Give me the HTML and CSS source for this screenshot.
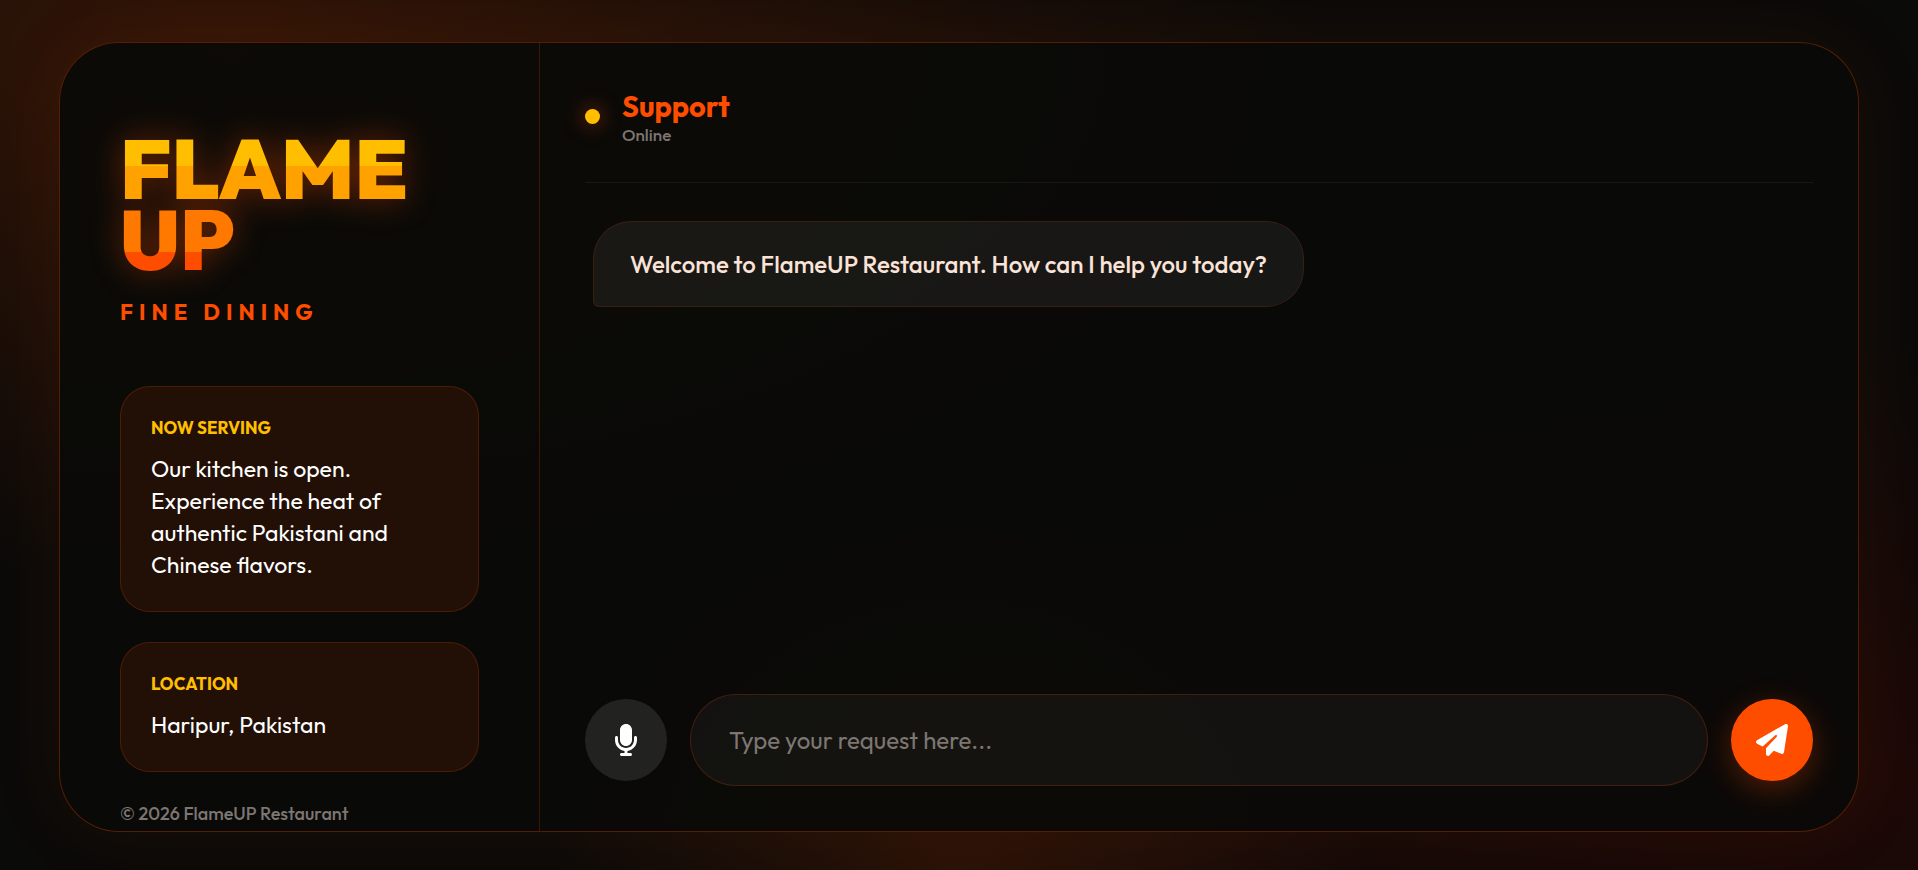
FILE: index.html
```html
<!DOCTYPE html>
<html lang="en">
<head>
  <meta charset="UTF-8" />
  <meta name="viewport" content="width=device-width, initial-scale=1.0"/>
  <title>FlameUP Restaurant</title>
  <link rel="stylesheet" href="styles.css">
</head>
<body>
  <div class="app">
    <aside class="sidebar">
      <h1 class="logo">FLAME<br>UP</h1>
      <p class="tagline">FINE DINING</p>

      <section class="info-card">
        <h2>NOW SERVING</h2>
        <p>Our kitchen is open. Experience the heat of authentic Pakistani and Chinese flavors.</p>
      </section>

      <section class="info-card">
        <h2>LOCATION</h2>
        <p>Haripur, Pakistan</p>
      </section>

      <footer>© 2026 FlameUP Restaurant</footer>
    </aside>

    <main class="chat">
      <header class="chat-header">
        <span class="status-dot"></span>
        <div>
          <h2>Support</h2>
          <p>Online</p>
        </div>
      </header>

      <div class="messages">
        <div class="message bot">Welcome to FlameUP Restaurant. How can I help you today?</div>
      </div>

      <form class="input-area">
        <button type="button" class="btn mic" aria-label="Voice input">
          <svg viewBox="0 0 384 512" width="24" height="32" fill="currentColor">
            <path d="M192 0C139 0 96 43 96 96V256c0 53 43 96 96 96s96-43 96-96V96c0-53-43-96-96-96zM64 216c0-13.300-10.700-24-24-24s-24 10.700-24 24v40c0 89.100 66.200 162.700 152 174.400V464H120c-13.300 0-24 10.700-24 24s10.700 24 24 24h72 72c13.300 0 24-10.700 24-24s-10.700-24-24-24H216V430.400c85.800-11.700 152-85.300 152-174.400V216c0-13.300-10.700-24-24-24s-24 10.700-24 24v40c0 70.700-57.300 128-128 128s-128-57.300-128-128V216z"/>
          </svg>
        </button>
        <input type="text" id="userInput" aria-label="Your request" placeholder="Type your request here..." autocomplete="off">
        <button type="submit" class="btn send" aria-label="Send">
          <svg viewBox="0 0 512 512" width="32" height="32" fill="currentColor">
            <path d="M498.100 5.600c10.100 7 15.400 19.100 13.500 31.200l-64 416c-1.500 9.700-7.400 18.200-16 23s-18.900 5.400-28 1.600L284 427.700l-68.500 74.100c-8.900 9.700-22.900 12.900-35.200 8.100S160 493.200 160 480V396.400c0-4 1.500-7.800 4.200-10.700L331.800 202.800c5.800-6.300 5.600-16-.4-22s-15.700-6.400-22-.7L106 360.800 17.700 316.600C7.100 311.300 .3 300.700 0 288.900s5.900-22.800 16.100-28.700l448-256c10.700-6.100 23.900-5.500 34 1.400z"/>
          </svg>
        </button>
      </form>
    </main>
  </div>

<script>
  document.querySelector(".input-area").addEventListener("submit", e => {
    e.preventDefault();
    const input = document.getElementById("userInput");
    const text = input.value.trim();
    if (!text) return;

    const bubble = document.createElement("div");
    bubble.className = "message user";
    bubble.textContent = text;
    document.querySelector(".messages").appendChild(bubble);
    input.value = "";
  });
</script>

</body>
</html>
```

FILE: styles.css
```css
:root {
  --flame: #ff4d00;
  --gold: #ffbf00;
  --dark: #0a0a08;
  --muted: #7d7672;
}

* {
  box-sizing: border-box;
  margin: 0;
  padding: 0;
}

body {
  font-family: 'Outfit', 'Lato', sans-serif;
  font-weight: 500;
  height: 100vh;
  padding: 42px 59px 38px;
  color: white;
  background:
    radial-gradient(ellipse at 12% 6%, rgba(255, 77, 0, 0.16), transparent 46%),
    radial-gradient(ellipse at 50% 100%, rgba(255, 77, 0, 0.12), transparent 30%),
    radial-gradient(ellipse at 100% 90%, rgba(139, 0, 0, 0.15), transparent 40%),
    var(--dark);
}

.app {
  display: flex;
  height: 100%;
  max-width: 1800px;
  margin: 0 auto;
  border: 1px solid rgba(255, 77, 0, 0.3);
  border-radius: 60px;
  background: rgba(10, 10, 8, 0.92);
  box-shadow: 0 0 80px rgba(255, 77, 0, 0.08);
  overflow: hidden;
}

.sidebar {
  flex: 0 0 480px;
  padding: 90px 60px 0;
  border-right: 1px solid rgba(255, 77, 0, 0.2);
}

.logo {
  font-size: 84px;
  font-weight: 900;
  line-height: 71px;
  background: linear-gradient(180deg, #ffbf00 23%, #ffa200 23%, #ffa200 50%, #ff7800 50%, #ff7800 84%, #ff4d00 84%);
  -webkit-background-clip: text;
  background-clip: text;
  -webkit-text-fill-color: transparent;
  filter: drop-shadow(0 0 16px rgba(255, 77, 0, 0.4));
}

.tagline {
  margin: 23px 0 60px;
  font-size: 22px;
  font-weight: 700;
  line-height: 28px;
  letter-spacing: 6px;
  color: var(--flame);
}

.info-card {
  margin-bottom: 30px;
  padding: 30px;
  border: 1px solid rgba(255, 77, 0, 0.2);
  border-radius: 30px;
  background: rgba(255, 77, 0, 0.1);
}

.info-card h2 {
  margin-bottom: 14px;
  font-size: 17px;
  font-weight: 700;
  line-height: 22px;
  color: var(--gold);
}

.info-card p {
  font-size: 23px;
  font-weight: 400;
  line-height: 32px;
}

.sidebar footer {
  font-size: 18px;
  line-height: 24px;
  color: var(--muted);
}

.chat {
  flex: 1;
  display: flex;
  flex-direction: column;
  min-width: 0;
  padding: 45px;
}

.chat-header {
  display: flex;
  align-items: center;
  gap: 22px;
  padding-bottom: 37px;
  border-bottom: 1px solid rgba(255, 255, 255, 0.06);
}

.status-dot {
  width: 15px;
  height: 15px;
  border-radius: 50%;
  background: var(--gold);
  box-shadow: 0 0 20px rgba(255, 77, 0, 0.6);
}

.chat-header h2 {
  font-size: 29px;
  font-weight: 700;
  line-height: 37px;
  color: var(--flame);
}

.chat-header p {
  font-size: 17px;
  line-height: 20px;
  color: var(--muted);
}

.messages {
  flex: 1;
  display: flex;
  flex-direction: column;
  align-items: flex-start;
  gap: 20px;
  padding: 38px 8px;
  overflow-y: auto;
}

.message {
  padding: 25px 36px;
  border: 1px solid rgba(255, 77, 0, 0.15);
  border-radius: 38px;
  font-size: 24px;
  line-height: 34px;
}

.message.bot {
  border-bottom-left-radius: 6px;
  background: rgba(255, 255, 255, 0.06);
  color: #fbe3d8;
}

.message.user {
  align-self: flex-end;
  border-bottom-right-radius: 6px;
  background: var(--flame);
}

.input-area {
  display: flex;
  align-items: center;
  gap: 23px;
}

.input-area input {
  flex: 1;
  min-width: 0;
  height: 92px;
  padding: 0 38px;
  border: 1px solid rgba(255, 77, 0, 0.2);
  border-radius: 46px;
  outline: none;
  background: rgba(255, 255, 255, 0.04);
  color: white;
  font-family: inherit;
  font-size: 24px;
}

.input-area input::placeholder {
  color: var(--muted);
}

.btn {
  display: flex;
  align-items: center;
  justify-content: center;
  width: 82px;
  height: 82px;
  border: none;
  border-radius: 50%;
  color: white;
  cursor: pointer;
}

.mic {
  background: rgba(255, 255, 255, 0.1);
}

.send {
  background: var(--flame);
  box-shadow: 0 8px 30px rgba(255, 77, 0, 0.3);
}
```
